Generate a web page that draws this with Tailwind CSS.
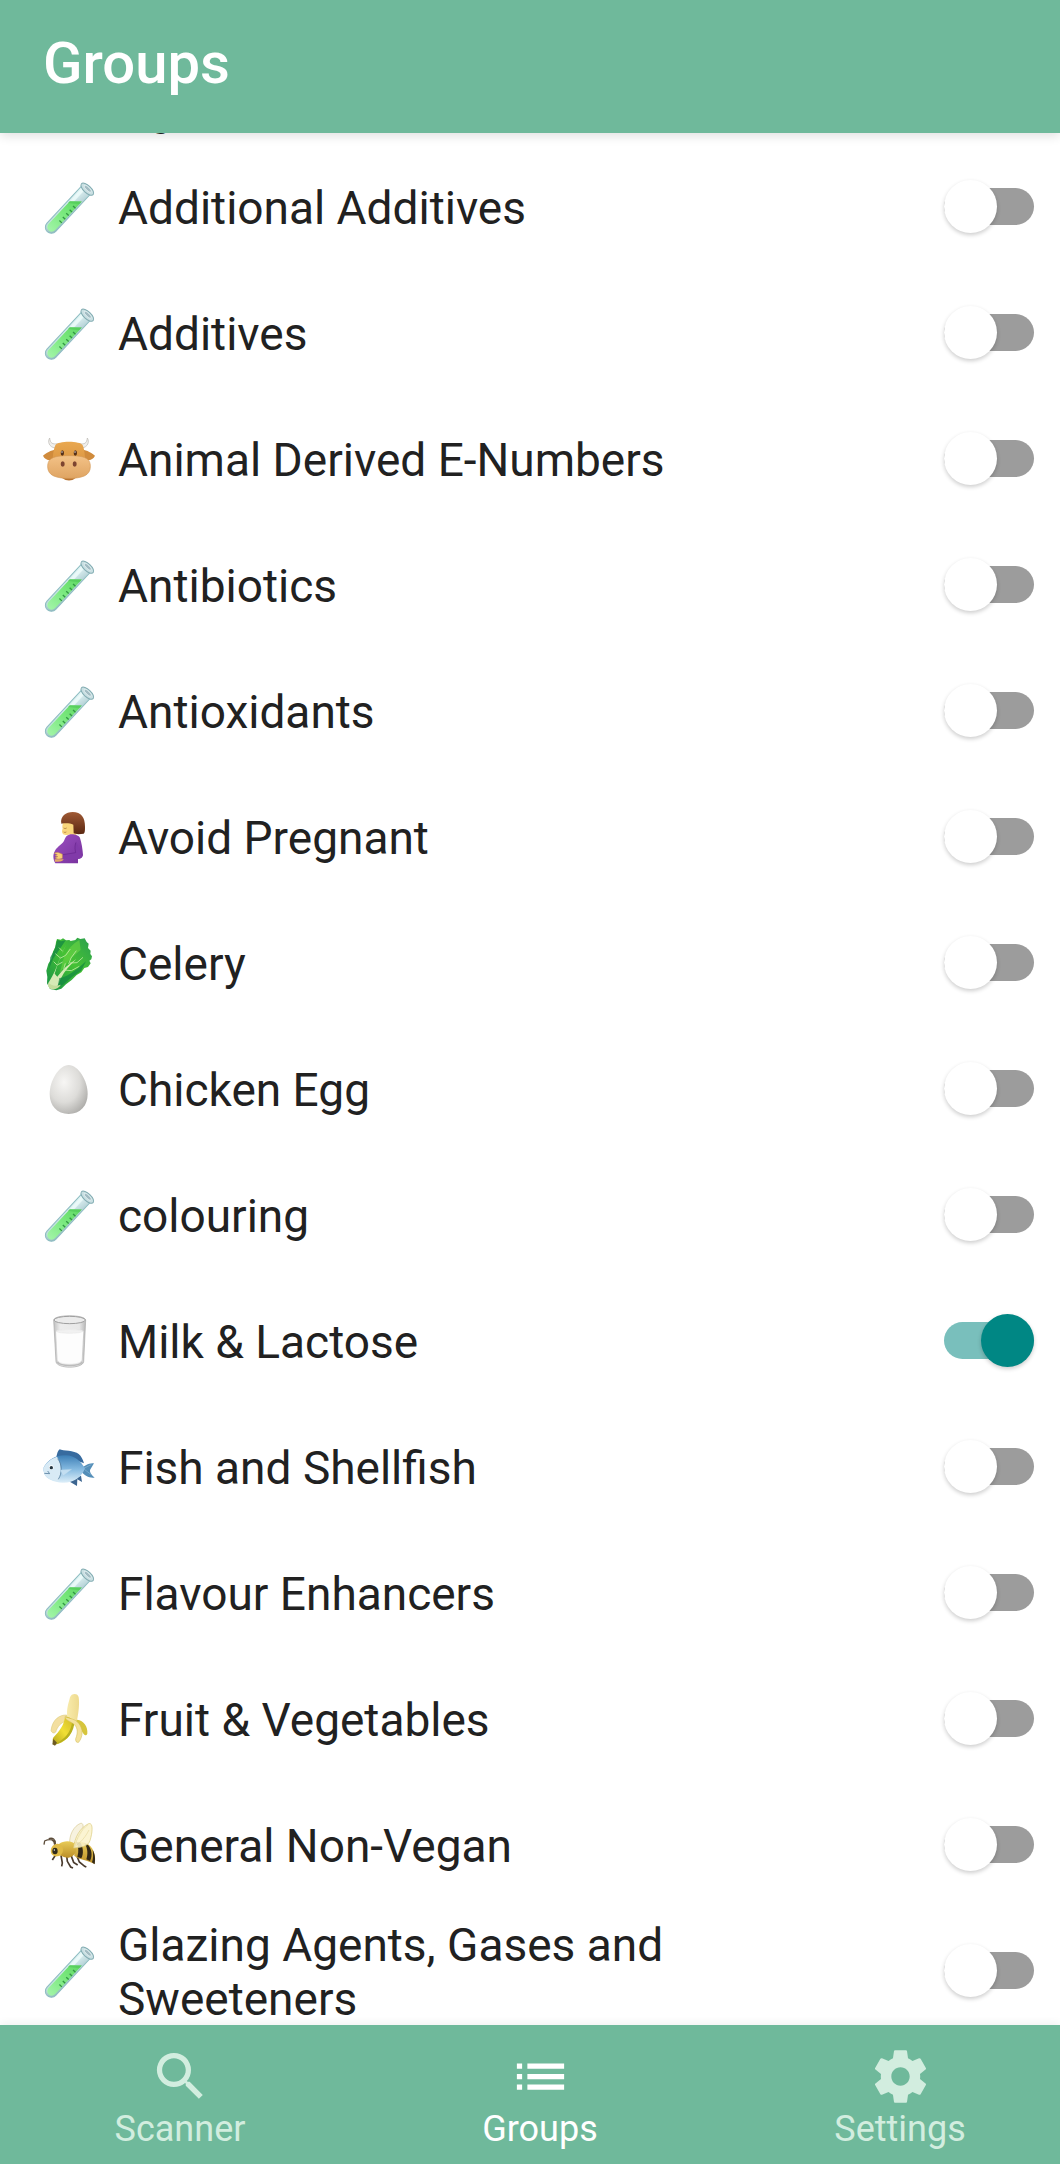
<!DOCTYPE html>
<html lang="en">
<head>
<meta charset="utf-8">
<meta name="viewport" content="width=device-width, initial-scale=1">
<title>Groups</title>
<script src="https://cdn.jsdelivr.net/npm/@tailwindcss/browser@4"></script>
</head>
<body class="flex h-screen flex-col overflow-hidden bg-white font-[Roboto,sans-serif] text-[#212121]">

<svg class="absolute size-0" aria-hidden="true">
  <defs>
    <linearGradient id="glass" x1="0" y1="0" x2="1" y2="1"><stop offset="0" stop-color="#eafafa"/><stop offset="1" stop-color="#8fb5bd"/></linearGradient>
    <linearGradient id="fluid" x1="0" y1="0" x2="0" y2="1"><stop offset="0" stop-color="#5fd763"/><stop offset=".5" stop-color="#7be97f"/><stop offset="1" stop-color="#a2f4a8"/></linearGradient>
    <linearGradient id="cowface" x1="0" y1="0" x2="0" y2="1"><stop offset="0" stop-color="#e9a850"/><stop offset="1" stop-color="#cf8637"/></linearGradient>
    <linearGradient id="muzzle" x1="0" y1="0" x2="0" y2="1"><stop offset="0" stop-color="#f3c287"/><stop offset="1" stop-color="#dfa462"/></linearGradient>
    <linearGradient id="hair" x1="0" y1="0" x2="0" y2="1"><stop offset="0" stop-color="#a05a35"/><stop offset="1" stop-color="#5a2711"/></linearGradient>
    <linearGradient id="dress" x1="0" y1="0" x2="1" y2="1"><stop offset="0" stop-color="#9b4fc0"/><stop offset="1" stop-color="#77319d"/></linearGradient>
    <linearGradient id="leaf" x1="0" y1="1" x2="1" y2="0"><stop offset="0" stop-color="#159046"/><stop offset=".55" stop-color="#46c234"/><stop offset="1" stop-color="#2a9d50"/></linearGradient>
    <radialGradient id="shell" cx=".38" cy=".35" r=".75"><stop offset="0" stop-color="#f7f6f4"/><stop offset=".55" stop-color="#dddcd9"/><stop offset="1" stop-color="#a9a8a5"/></radialGradient>
    <linearGradient id="cup" x1="0" y1="0" x2="1" y2="0"><stop offset="0" stop-color="#bfbfbf"/><stop offset=".2" stop-color="#ececec"/><stop offset=".8" stop-color="#e8e8e8"/><stop offset="1" stop-color="#b8b8b8"/></linearGradient>
    <linearGradient id="fishbody" x1="0" y1="0" x2="0" y2="1"><stop offset="0" stop-color="#3d7fb6"/><stop offset=".5" stop-color="#84b9e0"/><stop offset="1" stop-color="#deeff9"/></linearGradient>
    <linearGradient id="peel" x1="0" y1="1" x2="1" y2="0"><stop offset="0" stop-color="#b5a51c"/><stop offset=".5" stop-color="#f0df35"/><stop offset="1" stop-color="#cfb72a"/></linearGradient>
    <linearGradient id="fruit" x1="0" y1="0" x2="1" y2="0"><stop offset="0" stop-color="#f8ebac"/><stop offset="1" stop-color="#eeda8e"/></linearGradient>
    <linearGradient id="beebody" x1="0" y1="0" x2="0" y2="1"><stop offset="0" stop-color="#e8cb58"/><stop offset="1" stop-color="#bc8f28"/></linearGradient>
  </defs>

  <symbol id="tube" viewBox="39 35 162 162" overflow="visible">
    <g transform="rotate(43 118 122)">
      <path d="M100 47v154a17 17 0 0 0 36 0V47z" fill="url(#glass)" stroke="#8dbdc1" stroke-width="3"/>
      <path d="M105 52v148a13 13 0 0 0 10 12V52z" fill="#f0fdfc" opacity=".75"/>
      <path d="M105 106l27-24v118a13 13 0 0 1-27 0z" fill="url(#fluid)"/>
      <path d="M105 106l27-24v12l-27 20z" fill="#4fc856" opacity=".6"/>
      <path d="M122 110h10M122 125h10M122 140h10M122 155h10M122 170h10" stroke="#329744" stroke-width="4"/>
      <ellipse cx="119" cy="44" rx="24" ry="11" fill="#c9dfe2" stroke="#82acb2" stroke-width="3"/>
      <ellipse cx="119" cy="42" rx="14" ry="5" fill="#a3bcc3" stroke="#eefafa" stroke-width="2"/>
    </g>
  </symbol>

  <symbol id="cow" viewBox="39 35 162 162" overflow="visible">
    <path d="M59 56c2 17 9 19 23 17l-7 13c-18-3-23-19-16-30zM172 56c-2 17-9 19-23 17l7 13c18-3 23-19 16-30z" fill="#f0efec" stroke="#b9b6b0" stroke-width="2"/>
    <path d="M77 91c-14 1-29 10-38 18 5 11 18 17 30 12zM157 91c14 1 29 10 38 18-5 11-18 17-30 12z" fill="#d08b3c"/>
    <path d="M76 78c6-14 76-14 82 0 6 13 8 40 7 60-12 58-85 58-97 0-1-20 2-47 8-60z" fill="url(#cowface)"/>
    <path d="M99 177h36c-8 9-28 9-36 0z" fill="#b87330"/>
    <path d="M117 109c48 0 64 8 64 33 0 27-26 35-64 35s-64-8-64-35c0-25 16-33 64-33z" fill="url(#muzzle)" stroke="#d39856" stroke-width="2"/>
    <ellipse cx="97" cy="101" rx="5" ry="8" fill="#553019"/><ellipse cx="136" cy="101" rx="5" ry="8" fill="#553019"/>
    <ellipse cx="98" cy="134" rx="6" ry="8" fill="#7d4430"/><ellipse cx="134" cy="134" rx="6" ry="8" fill="#7d4430"/>
    <circle cx="96" cy="98" r="2" fill="#fff"/><circle cx="135" cy="98" r="2" fill="#fff"/>
  </symbol>

  <symbol id="pregnant" viewBox="39 29 162 162" overflow="visible">
    <path d="M100 67c-3 9-4 17-2 21-4 8-2 16 6 18 5 2 12 1 17-1v13h18V65z" fill="#f9d67c"/>
    <path d="M94 73c-4-22 14-35 34-35 26 0 37 17 37 44 0 11 0 18-4 21-11 2-25 2-30-1l-1-26c-9-4-21-5-36-3z" fill="url(#hair)"/>
    <path d="M101 86c3 2 6 2 9 0M101 98c3 2 6 1 8 0" stroke="#98602e" stroke-width="2" fill="none"/>
    <path d="M117 106c10-3 29 0 33 10 5 15 8 34 9 51-1 9-9 11-15 12v13H76c-7-13-8-27-1-38 7-13 25-20 29-34 2-6 6-12 13-14z" fill="url(#dress)"/>
    <path d="M139 126c-7 13-4 24-3 34l-39 6v10c21 7 53 5 59-4" fill="#813aa9"/>
    <path d="M137 130c-4 15-1 24 0 30l-39 6" fill="none" stroke="#68268e" stroke-width="2"/>
    <path d="M73 162c6-4 12-4 24 3v12c-9 4-18 2-22-2l9-3-9-3 7-3z" fill="#f8d078" stroke="#c99347" stroke-width="1.500"/>
    <path d="M74 180h27c-2 6-10 9-26 7z" fill="#e3a967"/>
  </symbol>

  <symbol id="celery" viewBox="39 32 162 162" overflow="visible">
    <path d="M81 44l11 2 7-4 9 6 10-1 4 3 14-3 6-7 9 4 13-2 6 11 6 5-2 13 8 8-1 10 5 7-2 9-6 4 4 8-8 11-11 3-9 13-14 8-15 15-17 13-14 13-15 5-19-4-9-17 1-19-3-19 6-21 10-15 4-21 7-14 2-15z" fill="url(#leaf)"/>
    <path d="M82 46l11 5 14-3-17 25-21 31-12 30 4-35 12-22z" fill="#178a42" opacity=".8"/>
    <path d="M148 47c-19 10-35 29-46 52l-13 48 32-44 31-26z" fill="#65d243" opacity=".7"/>
    <path d="M108 61c-6 14-15 31-22 50-8 22-16 42-27 58-9 13-5 25 11 23 16-2 14-13 22-29 12-24 29-41 47-59-23 15-42 32-57 53l-8-9c8-27 18-55 34-87z" fill="#d5eab5"/>
    <path d="M81 122l-10-10M90 100L76 88M98 81L87 70M90 102l17-9 14-19M82 122l16-9M101 135l5-18M116 119l7-18 16-22M102 137l22 2 24-13M120 116l21-1 18-16" fill="none" stroke="#c0eba3" stroke-width="2.500"/>
    <path d="M88 161c19-1 45-20 68-40l12-10-15 29-27 18-27 23-17 9z" fill="#118642" opacity=".7"/>
    <path d="M54 174c9 10 22 13 38 7-4 10-23 20-34 10z" fill="#c4dd9d"/>
  </symbol>

  <symbol id="egg" viewBox="39 35 162 162" overflow="visible">
    <path d="M116 47c29 0 57 47 57 87 0 35-22 60-57 60s-57-25-57-60c0-40 28-87 57-87z" fill="url(#shell)"/>
  </symbol>

  <symbol id="milk" viewBox="39 41 162 162" overflow="visible">
    <path d="M71 62c3-17 93-17 96 0l-6 125c-3 22-80 22-83 0z" fill="url(#cup)" stroke="#a8a8a8" stroke-width="2"/>
    <path d="M78 96c10-7 71-7 82 0l-5 87c-6 14-66 14-72 0z" fill="#fdfdfd"/>
    <path d="M78 96c10 8 71 8 82 0-11-7-72-7-82 0z" fill="#f1f1f1" stroke="#dcdcdc" stroke-width="1"/>
    <ellipse cx="119" cy="62" rx="47" ry="11" fill="#ebebeb" stroke="#9f9f9f" stroke-width="3"/>
    <path d="M82 188c11 14 64 14 75 0" fill="none" stroke="#bbb" stroke-width="4"/>
  </symbol>

  <symbol id="fish" viewBox="39 29 162 162" overflow="visible">
    <path d="M79 82c3-9 3-16 10-22 9 5 44 3 57 14 8 7 12 15 16 28l-33-12z" fill="#376b9f"/>
    <path d="M155 116c9-6 20-16 37-14l-12 20c-1 7 3 14 14 23-18 2-29-6-39-16z" fill="#548eb8"/>
    <path d="M117 156l24 14 1-20 14 8-3-19z" fill="#3c6590"/>
    <path d="M39 118c15-29 40-41 68-40 29 1 45 18 58 39-12 30-35 44-67 43-27-1-52-14-55-27z" fill="url(#fishbody)"/>
    <path d="M39 118c11-20 25-31 42-36 13 18 15 46 5 75-21-3-41-14-43-24z" fill="#d8eaf5"/>
    <path d="M83 88c14 17 14 43 2 62M43 132l16 1-6-8" fill="none" stroke="#567d9d" stroke-width="2.500"/>
    <path d="M91 122l34-2-26 20z" fill="#c3def1" stroke="#a6cbe4"/>
    <circle cx="64" cy="114" r="7" fill="#f7fafc"/><circle cx="64" cy="115" r="5" fill="#23333e"/>
    <path d="M163 116l21-10M163 120l21 16" stroke="#85b5d5" stroke-width="2"/>
  </symbol>

  <symbol id="banana" viewBox="39 35 162 162" overflow="visible">
    <path d="M120 54c4-13 24-14 26 0 3 19 0 45-6 76l-25-3-4-23c0-22 5-33 9-50z" fill="url(#fruit)"/>
    <path d="M110 107c-20-1-43 12-47 47 5 11 15 8 16-1 7-16 17-26 36-29z" fill="#f3dfa0" stroke="#d6c46c" stroke-width="1.500"/>
    <path d="M141 121c21 2 33 22 31 42-4 8-10 5-15-5-5-13-10-21-21-27z" fill="#d6c53c"/>
    <path d="M105 113c-3 25-18 44-36 63-2 9-1 18 6 20 27-5 52-24 56-67-4-12-19-19-26-16z" fill="url(#peel)"/>
    <path d="M126 130c-4 29-20 47-50 64 27-6 51-23 57-61z" fill="#b7b01f"/>
    <path d="M70 179l-3 16 8 4 6-9z" fill="#6d5a22"/>
    <path d="M105 112c13 6 31 6 42 21 12 16 13 38-1 56-7 2-10-4-9-11 8-19 6-37-9-46-12-8-22-11-23-20z" fill="#f4e29c" stroke="#cfb94f" stroke-width="1.500"/>
  </symbol>

  <symbol id="bee" viewBox="39 35 162 162" overflow="visible">
    <path d="M119 112c-1-21 11-50 33-58 14-2 8 28-18 61z" fill="#f7f2df" stroke="#d8ca96" stroke-width="2"/>
    <path d="M93 150l4 23-2 10M110 151l2 17 10 17 7 3M122 147l9 24 12 8M138 145l10 25 16 13 5 2M76 150l-9 14" fill="none" stroke="#4a3b2d" stroke-width="5"/>
    <path d="M132 111c24-5 54 1 62 37 2 12 2 21-1 28-19-12-44-12-60-24z" fill="url(#beebody)"/>
    <path d="M138 111c8 13 9 27 4 44l12 4c8-16 5-32-2-47zM163 113c11 16 11 34 6 49l11 5c9-18 4-36-5-47zM188 133c2 14 2 27-2 38l8 6c2-16 2-28-6-44z" fill="#322817"/>
    <path d="M87 116c14-12 42-11 49 3 8 17-2 34-20 38-18 1-33-9-35-22z" fill="url(#beebody)"/>
    <path d="M64 128c6-13 23-17 32-6 7 15 1 29-14 31-12 2-24-8-18-25z" fill="#dfba47"/>
    <ellipse cx="75" cy="137" rx="8" ry="10" fill="#302a1b"/><circle cx="73" cy="134" r="2" fill="#fff"/>
    <path d="M74 118c-1-15-11-19-31-11M76 116c1-14-8-20-20-16M44 107l-2 11" fill="none" stroke="#5b4b39" stroke-width="4"/>
    <path d="M131 128c2-31 20-62 45-73 14-4 12 25 4 51-6 18-28 20-49 22z" fill="#faf2cc" fill-opacity=".88" stroke="#dac978" stroke-width="2"/>
    <path d="M134 126c6-28 18-51 40-68M139 120c19-14 29-29 38-46" fill="none" stroke="#dfd18f" stroke-width="1.500"/>
  </symbol>
</svg>

<header class="relative z-10 shrink-0 bg-[#6fb99b] px-[43px] pt-[27px] pb-[34px] shadow-[0_3px_10px_rgba(0,0,0,0.12)]">
  <h1 class="text-[58px] leading-[72px] font-medium text-white">Groups</h1>
</header>

<main class="min-h-0 flex-1 overflow-hidden">
  <!-- The list is scrolled most of one row down -->
  <ul id="groups" class="-mt-[116px]"></ul>
</main>

<nav class="relative z-10 shrink-0 overflow-hidden bg-[#6fb99b] shadow-[0_-2px_8px_rgba(0,0,0,0.06)]" aria-label="Main">
  <div class="-mr-5 grid grid-cols-3 text-[36px] leading-[42px] text-[#d2eddf]">
    <a href="#scanner" class="flex flex-col items-center pt-5 pb-[14px]">
      <svg class="size-[63px]" viewBox="0 0 24 24" fill="currentColor" aria-hidden="true"><path d="M15.500 14h-.79l-.28-.27A6.471 6.471 0 0 0 16 9.500 6.500 6.500 0 1 0 9.500 16c1.610 0 3.090-.59 4.230-1.570l.27.28v.79l5 4.990L20.490 19l-4.990-5zm-6 0C7.010 14 5 11.990 5 9.500S7.010 5 9.500 5 14 7.010 14 9.500 11.990 14 9.500 14z"/></svg>
      <span>Scanner</span>
    </a>
    <a href="#groups" aria-current="page" class="flex flex-col items-center pt-5 pb-[14px] text-white">
      <svg class="size-[63px]" viewBox="0 0 24 24" fill="currentColor" aria-hidden="true"><path d="M3 13h2v-2H3v2zm0 4h2v-2H3v2zm0-8h2V7H3v2zm4 4h14v-2H7v2zm0 4h14v-2H7v2zM7 7v2h14V7H7z"/></svg>
      <span>Groups</span>
    </a>
    <a href="#settings" class="flex flex-col items-center pt-5 pb-[14px]">
      <svg class="size-[63px]" viewBox="0 0 24 24" fill="currentColor" aria-hidden="true"><path d="M19.430 12.980c.04-.32.07-.64.07-.98s-.03-.66-.07-.98l2.110-1.650c.19-.15.24-.42.12-.64l-2-3.460c-.12-.22-.39-.3-.61-.22l-2.490 1c-.52-.4-1.080-.73-1.690-.98l-.38-2.650C14.460 2.180 14.250 2 14 2h-4c-.25 0-.46.18-.49.42l-.38 2.650c-.61.25-1.170.59-1.690.98l-2.490-1c-.23-.09-.49 0-.61.22l-2 3.460c-.13.22-.07.49.12.64l2.110 1.650c-.04.32-.07.65-.07.98s.03.66.07.98l-2.110 1.650c-.19.15-.24.42-.12.64l2 3.460c.12.22.39.3.61.22l2.490-1c.52.4 1.080.73 1.690.98l.38 2.650c.03.24.24.42.49.42h4c.25 0 .46-.18.49-.42l.38-2.650c.61-.25 1.170-.59 1.690-.98l2.490 1c.23.09.49 0 .61-.22l2-3.460c.12-.22.07-.49-.12-.64l-2.110-1.650zM12 15.500c-1.930 0-3.500-1.570-3.500-3.500s1.570-3.500 3.500-3.500 3.500 1.570 3.500 3.500-1.570 3.500-3.500 3.500z"/></svg>
      <span>Settings</span>
    </a>
  </div>
</nav>

<script>
  const groups = [
    ['tube', 'Acidity Regulators, Anti-Caking Agents'],
    ['tube', 'Additional Additives'],
    ['tube', 'Additives'],
    ['cow', 'Animal Derived E-Numbers'],
    ['tube', 'Antibiotics'],
    ['tube', 'Antioxidants'],
    ['pregnant', 'Avoid Pregnant'],
    ['celery', 'Celery'],
    ['egg', 'Chicken Egg'],
    ['tube', 'colouring'],
    ['milk', 'Milk & Lactose', true],
    ['fish', 'Fish and Shellfish'],
    ['tube', 'Flavour Enhancers'],
    ['banana', 'Fruit & Vegetables'],
    ['bee', 'General Non-Vegan'],
    ['tube', 'Glazing Agents, Gases and Sweeteners'],
  ];
  document.getElementById('groups').innerHTML = groups.map(([icon, name, on], i) => `
    <li class="flex h-[126px] items-center pr-[26px] pl-[43px]">
      <svg class="mr-[21px] size-[54px] shrink-0 overflow-visible" aria-hidden="true"><use href="#${icon}"/></svg>
      <label for="group-${i}" class="flex-1 pt-1 pr-20 text-[46px] leading-[54px]">${name.replace('&', '&amp;')}</label>
      <input id="group-${i}" type="checkbox" role="switch" ${on ? 'checked' : ''} class="relative h-[37px] w-[90px] shrink-0 appearance-none rounded-full bg-[#9c9c9c] before:absolute before:-top-2 before:left-0 before:size-[53px] before:rounded-full before:bg-white before:shadow-[0_2px_4px_rgba(0,0,0,0.2)] checked:bg-[#79bfbc] checked:before:left-[37px] checked:before:bg-[#008784]">
    </li>`).join('');
</script>
</body>
</html>
